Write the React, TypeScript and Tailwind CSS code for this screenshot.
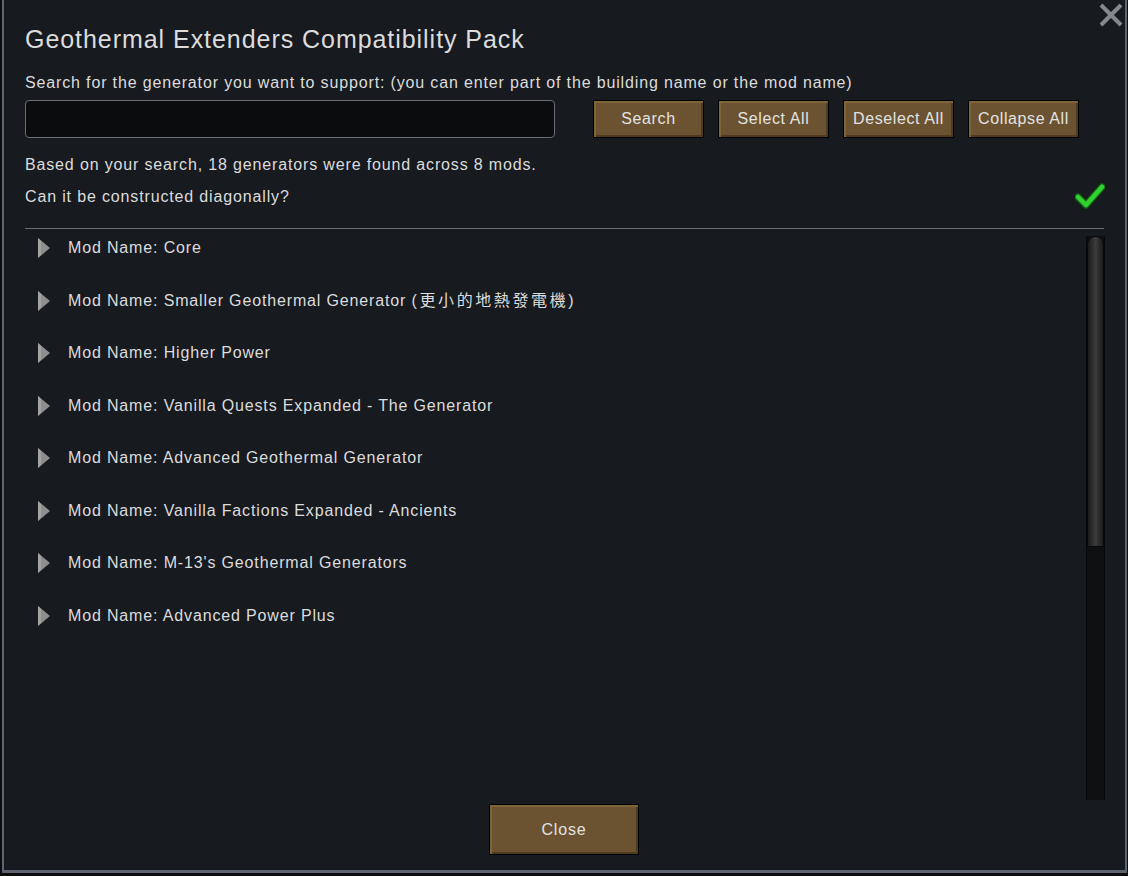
import React from 'react';

const mods: { name: string; cjk?: string }[] = [
  { name: 'Core' },
  { name: 'Smaller Geothermal Generator ', cjk: '(更小的地熱發電機)' },
  { name: 'Higher Power' },
  { name: 'Vanilla Quests Expanded - The Generator' },
  { name: 'Advanced Geothermal Generator' },
  { name: 'Vanilla Factions Expanded - Ancients' },
  { name: "M-13's Geothermal Generators" },
  { name: 'Advanced Power Plus' },
];

const topButtons = ['Search', 'Select All', 'Deselect All', 'Collapse All'];

function GameButton({ label, className }: { label: string; className: string }) {
  return (
    <button
      className={`flex items-center justify-center border border-black bg-[#6b5331] text-[#e2e2e2] shadow-[inset_2px_2px_0_#7e6439,inset_-2px_-2px_0_#4f3c20] ${className}`}
    >
      {label}
    </button>
  );
}

function Triangle() {
  return (
    <svg width="14" height="22" viewBox="0 0 14 22" className="shrink-0">
      <polygon points="1,1 13,11 1,21" fill="#8e8e8e" />
      <polygon points="1,1 4,4 4,18 1,21" fill="#a3a3a3" />
      <polygon points="13,11 4,18 1,21" fill="#6e6e6e" />
    </svg>
  );
}

export default function App() {
  return (
    <div className="w-[1128px] h-[876px] bg-[#0c0d0f] overflow-hidden font-['Liberation_Sans','Noto_Sans_CJK_TC',sans-serif]">
      <div className="ml-[2px] w-[1125px] h-[873px] border-l-[2px] border-r-[2px] border-b-[3px] border-[#5e6570] bg-[#171a1f] relative flex flex-col pl-[21px] pr-[20px] text-[#dcdcdc]">
        {/* close X */}
        <svg width="26" height="26" viewBox="0 0 26 26" className="absolute right-[1px] top-[2px]">
          <path d="M3 3 L23 23 M23 3 L3 23" stroke="#85888c" strokeWidth="4" />
        </svg>

        <h1 className="text-[25px] tracking-[0.95px] leading-none mt-[27px] h-[26px]">
          Geothermal Extenders Compatibility Pack
        </h1>

        <p className="text-[16px] tracking-[0.85px] leading-none mt-[22px]">
          Search for the generator you want to support: (you can enter part of the building name or the mod name)
        </p>

        <div className="flex items-center mt-[9px] h-[38px]">
          <input className="w-[530px] h-[38px] rounded-[4px] border border-[#6b6e72] bg-[#0b0c0e] outline-none" />
          <div className="flex gap-[14px] ml-[38px]">
            {topButtons.map((b) => (
              <GameButton key={b} label={b} className="w-[111px] h-[38px] text-[16px] tracking-[0.6px]" />
            ))}
          </div>
        </div>

        <p className="text-[16px] tracking-[0.85px] leading-none mt-[19px]">
          Based on your search, 18 generators were found across 8 mods.
        </p>

        <div className="flex items-center justify-between mt-[9px] h-[30px]">
          <p className="text-[16px] tracking-[0.85px] leading-none">Can it be constructed diagonally?</p>
          <svg width="30" height="26" viewBox="0 0 30 26" className="mt-[-2px]">
            <path d="M3 14 L11 22 L27 4" fill="none" stroke="#146b14" strokeWidth="7" strokeLinecap="round" strokeLinejoin="round" />
            <path d="M3 14 L11 22 L27 4" fill="none" stroke="#2fd22f" strokeWidth="4.5" strokeLinecap="round" strokeLinejoin="round" />
          </svg>
        </div>

        <div className="h-px bg-[#6b6f74] mt-[16px] mr-[1px]" />

        <div className="flex mt-[7px] h-[564px]">
          <div className="flex-1 flex flex-col">
            {mods.map((m) => (
              <div key={m.name} className="flex items-center h-[52.5px] pb-[28px] pl-[12px]">
                <Triangle />
                <span className="ml-[17px] text-[16px] tracking-[0.85px] leading-none whitespace-pre">
                  Mod Name: {m.name}
                  {m.cjk && <span className="tracking-[2.6px]">{m.cjk}</span>}
                </span>
              </div>
            ))}
          </div>
          <div className="w-[19px] h-full bg-[#0d0f11] border-x border-[#07080a] flex flex-col">
            <div className="h-[311px] rounded-t-[8px] bg-gradient-to-r from-[#1b1b1b] via-[#3c3c3c] to-[#1b1b1b] border border-[#080808]" />
          </div>
        </div>

        <div className="flex justify-center mt-[4px]">
          <GameButton label="Close" className="w-[150px] h-[51px] text-[16px] tracking-[0.85px] ml-[-2px]" />
        </div>
      </div>
    </div>
  );
}
